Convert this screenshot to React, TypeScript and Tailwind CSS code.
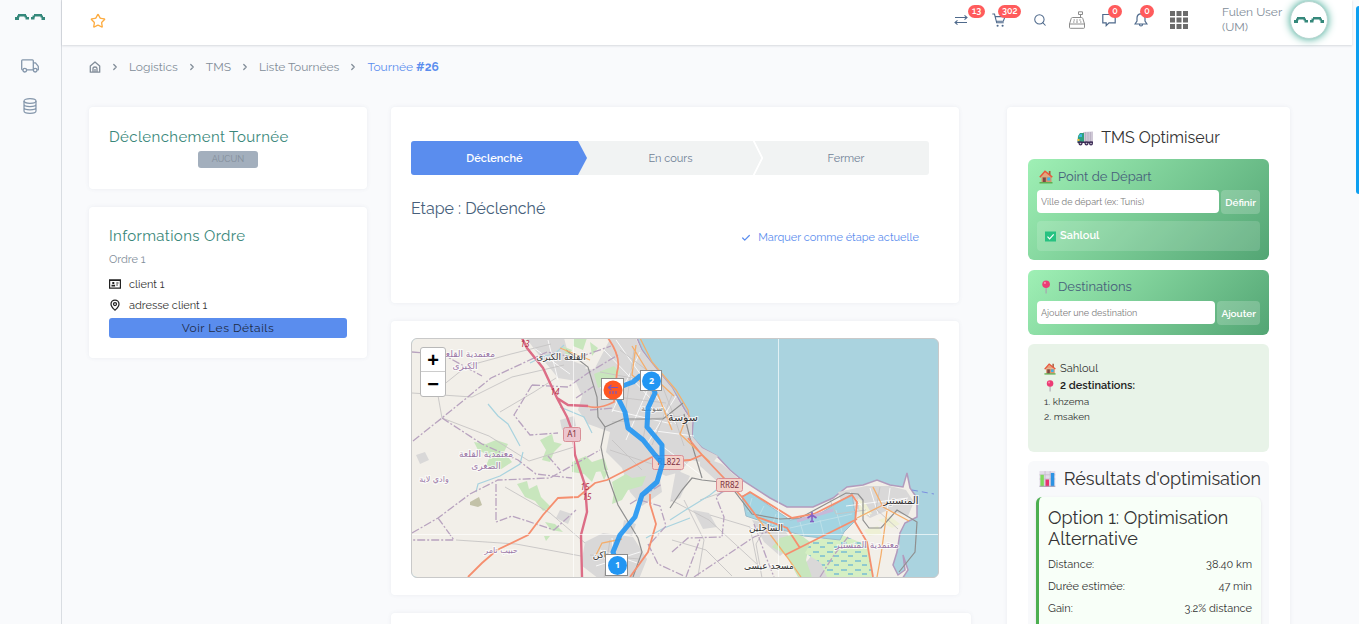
import React from 'react';
import { Check, ChevronRight, MapPin, Search, Star } from 'lucide-react';

const BREADCRUMBS = ['Logistics', 'TMS', 'Liste Tournées'];

const RESULTS = [
  { label: 'Distance:', value: '38.40 km' },
  { label: 'Durée estimée:', value: '47 min' },
  { label: 'Gain:', value: '3.2% distance' },
];

const CARD = 'rounded bg-white shadow-[0_0_4px_rgba(60,80,110,0.08)]';

function Logo({ className }: { className: string }) {
  return (
    <svg viewBox="0 0 30 6" className={className} fill="#35887b" aria-hidden="true">
      <path d="M3 0h8v2.500H3zM0 3h4v3H0zM2 1.500h2.500v2H2zM9.500 1.500h2.500v2h-2.500zM10.500 3h3.500v2.500h-3.500zM19 0h8v2.500h-8zM16 3h3.500v2.500H16zM17.500 1.500h2.500v2h-2.500zM25.500 1.500h2.500v2h-2.500zM26.500 3H30v3h-3.500z" />
    </svg>
  );
}

function TruckIcon() {
  return (
    <svg viewBox="0 0 18 14" className="h-[14px] w-[18px]" fill="none" stroke="#8496ab" strokeWidth="1.3" strokeLinejoin="round">
      <path d="M2 10.8H1.4Q.7 10.8.7 10V1.7Q.7.8 1.6.8h9.8q.9 0 .9.9v9.1H5.6M12.3 3.9h2.2l2.8 3.5v3.4h-1.2" />
      <circle cx="3.8" cy="11.2" r="1.8" />
      <circle cx="14.2" cy="11.2" r="1.8" />
    </svg>
  );
}

function DatabaseIcon() {
  return (
    <svg viewBox="0 0 14 16" className="h-4 w-[14px]" fill="none" stroke="#8496ab" strokeWidth="1.2">
      <ellipse cx="7" cy="3" rx="6" ry="2.3" />
      <path d="M1 3v10c0 1.3 2.7 2.3 6 2.3s6-1 6-2.3V3M1 6.3c0 1.3 2.7 2.3 6 2.3s6-1 6-2.3M1 9.6c0 1.3 2.7 2.3 6 2.3s6-1 6-2.3" />
    </svg>
  );
}

function HouseIcon() {
  return (
    <svg viewBox="0 0 12 12" className="h-3 w-3" fill="none" stroke="#828d99" strokeWidth="1.300" strokeLinejoin="round">
      <path d="M1.300 5 6 1l4.700 4v6.200H1.300zM4 11V7.500q0-1.500 2-1.500t2 1.500V11M6 8v3" />
    </svg>
  );
}

function ExchangeIcon() {
  return (
    <svg viewBox="0 0 14 12" className="h-3 w-[14px]" fill="none" stroke="#4f6a8c" strokeWidth="1.100">
      <path d="M1 3.500h12M10.500 1.300 13 3.500l-2.500 2.200M13 8.500H1M3.500 6.300 1 8.500l2.500 2.200" />
    </svg>
  );
}

function CartIcon() {
  return (
    <svg viewBox="0 0 14 14" className="h-[14px] w-[14px]" fill="none" stroke="#4f6a8c" strokeWidth="1.1">
      <path d="M.3 1h2.200l2.200 8.800h7M3.200 3.600h9.800l-1.700 4.600H4.300" />
      <circle cx="5.600" cy="12.700" r=".5" />
      <circle cx="10.600" cy="12.700" r=".5" />
    </svg>
  );
}

function RegisterIcon() {
  return (
    <svg viewBox="0 0 18 18" className="h-[18px] w-[18px]" fill="none" stroke="#8b8b8b" strokeWidth="1">
      <path d="M10.500.8h4v2.700h-4zM12.500 3.500v3M4.500 6.500h9q1 0 1.300 1L16.500 13h-15L3.200 7.500q.3-1 1.300-1zM1.500 13v3.500q0 .8.800.8h13.400q.8 0 .8-.8V13M5.500 9H7M8.300 9h1.500M11.200 9h1.500M5 11h1.500M8 11h2M12 11h1.500" />
    </svg>
  );
}

function ChatIcon() {
  return (
    <svg viewBox="0 0 14 14" className="h-[14px] w-[14px]" fill="none" stroke="#4f6a8c" strokeWidth="1.200">
      <path d="M.8 1.500h12.400v8.300H7L4.200 12.600V9.800H.8z" />
    </svg>
  );
}

function BellIcon() {
  return (
    <svg viewBox="0 0 14 14" className="h-[14px] w-[14px]" fill="none" stroke="#4f6a8c" strokeWidth="1.200">
      <path d="M7 .8c-2.600 0-4 1.900-4 4.200V8L1 11h12l-2-3V5c0-2.300-1.400-4.200-4-4.200zM5.500 11.500c0 2 3 2 3 0" />
    </svg>
  );
}

function ClientIcon() {
  return (
    <svg viewBox="0 0 12 10" className="mt-[-2px] h-[10px] w-3" fill="none" stroke="#222">
      <path d="M.6.900h10.800v8.300H.6zM.5 1.500h11" strokeWidth="1.200" />
      <path d="M3.300 3h2v2h-2zM2.500 5.700h3.600V7.500H2.500zM7.300 3.500h2.200v1H7.300zM7.300 5.500h1.500v1H7.300z" fill="#222" stroke="none" />
    </svg>
  );
}

function LorryIcon() {
  return (
    <svg viewBox="0 0 17 15" className="h-[15px] w-[17px]">
      <path d="M6 1l10-.500v10.500H6z" fill="#cfc8d6" />
      <path d="M8.500 1v10M11 1v10M13.500 1v10" stroke="#b3aabd" strokeWidth=".7" />
      <path d="M1 5l2-3h4v9H.500z" fill="#2fa07d" />
      <path d="M1.400 6l1.500-2.700H5V6z" fill="#3cb8e8" />
      <path d="M.5 8h2v2h-2z" fill="#f6b93b" />
      <path d="M.500 10.500h15.500v1.500H.500z" fill="#3b2b55" />
      <g fill="#3b2b55">
        <circle cx="3.500" cy="12.500" r="2" />
        <circle cx="9.500" cy="12.500" r="2" />
        <circle cx="14" cy="12.500" r="2" />
      </g>
      <g fill="#cfc8d6">
        <circle cx="3.500" cy="12.500" r=".8" />
        <circle cx="9.500" cy="12.500" r=".8" />
        <circle cx="14" cy="12.500" r=".8" />
      </g>
    </svg>
  );
}

function HomeEmoji({ className }: { className: string }) {
  return (
    <svg viewBox="0 0 14 14" className={className}>
      <path d="M2.500 6.500h10v6h-10z" fill="#d9936c" />
      <path d="M7 1.500 12 6.500H2z" fill="#e8a27c" />
      <path d="M9.800 1h1.700v4H9.800z" fill="#a5583c" />
      <path d="M.8 7.300 6 1.200l7.300 5.900" fill="none" stroke="#e8563c" strokeWidth="1.500" />
      <path d="M3.800 7.500h3v5h-3z" fill="#7a4a45" />
      <path d="M8.300 7.500h2.900v3H8.300z" fill="#35b5f0" />
      <path d="M.5 12h13v1.500H.5z" fill="#5fae50" />
    </svg>
  );
}

function PinEmoji({ className }: { className: string }) {
  return (
    <svg viewBox="0 0 14 14" className={className}>
      <path d="M6.500 7h1.200v6.500H6.500z" fill="#a8a3b0" />
      <circle cx="7.100" cy="4.200" r="3.800" fill="#ec3c75" />
      <circle cx="5.900" cy="2.900" r="1.100" fill="#ff86ab" />
    </svg>
  );
}

function CheckEmoji() {
  return (
    <svg viewBox="0 0 11 11" className="h-[11px] w-[11px]">
      <path d="M0 .5h11v10H0z" fill="#27c281" />
      <path d="M2.500 5.700 4.600 7.800 8.700 3.300" fill="none" stroke="#fff" strokeWidth="1.200" />
    </svg>
  );
}

function ChartEmoji() {
  return (
    <svg viewBox="0 0 18 18" className="h-[18px] w-[18px]">
      <path d="M.5.500h17v17H.5z" fill="#e3dce9" />
      <path d="M.5 4.500h17M.5 9h17M6.500.500v17M12 .500v17" stroke="#c3b9cc" strokeWidth=".8" />
      <path d="M1.500 4.500h3.700v12.500H1.500z" fill="#7fd95c" />
      <path d="M7 9.500h3.700v7.500H7z" fill="#e8336f" />
      <path d="M12.700 2.500h3.700v14.500h-3.700z" fill="#2c93e3" />
      <path d="M.5 16.800h17" stroke="#a79db3" />
    </svg>
  );
}

function Badge({ near, children }: { near?: boolean; children: React.ReactNode }) {
  return (
    <span
      className={`absolute flex h-[13px] min-w-[14px] items-center justify-center rounded-full bg-[#ff5b5c] px-1 text-[9px] leading-none font-semibold text-white ${
        near ? '-top-[8px] left-[6px]' : '-top-[9px] left-[14px]'
      }`}
    >
      {children}
    </span>
  );
}

function Sidebar() {
  return (
    <aside className="flex w-[62px] shrink-0 flex-col items-center border-r border-[#d9dde2] bg-[#f9fafc] pt-[14px] pr-px">
      <Logo className="h-[6px] w-[30px]" />
      <nav className="mt-[39px] flex flex-col items-center gap-[25px]" aria-label="Modules">
        <a href="#tms" aria-label="TMS"><TruckIcon /></a>
        <a href="#stock" aria-label="Stock"><DatabaseIcon /></a>
      </nav>
    </aside>
  );
}

function Header() {
  return (
    <header className="mr-[7px] flex h-[45px] shrink-0 items-center bg-white pr-6 pb-[5px] pl-[28px] shadow-[0_1px_2px_rgba(60,70,90,0.18)]">
      <button type="button" aria-label="Favori" className="pt-[2px]">
        <Star className="h-4 w-4 text-[#fdac41]" strokeWidth={2} />
      </button>
      <div className="ml-auto flex items-center">
        <div className="mr-[34px] flex items-center text-[#4f6a8c]">
          <button type="button" aria-label="Transferts" className="relative mr-6"><ExchangeIcon /><Badge>13</Badge></button>
          <button type="button" aria-label="Panier" className="relative mr-[27px]"><CartIcon /><Badge near>302</Badge></button>
          <button type="button" aria-label="Rechercher" className="mr-[21px]"><Search className="h-[14px] w-[14px]" strokeWidth={1.800} /></button>
          <button type="button" aria-label="Caisse" className="mr-4"><RegisterIcon /></button>
          <button type="button" aria-label="Messages" className="relative mr-[18px]"><ChatIcon /><Badge near>0</Badge></button>
          <button type="button" aria-label="Notifications" className="relative mr-[22px]"><BellIcon /><Badge near>0</Badge></button>
          <button type="button" aria-label="Applications">
            <svg viewBox="0 0 18 18" className="h-[18px] w-[18px]" fill="#6b6b6b">
              <path d="M0 0h5v5H0zM6.500 0h5v5h-5zM13 0h5v5h-5zM0 6.500h5v5H0zM6.500 6.500h5v5h-5zM13 6.500h5v5h-5zM0 13h5v5H0zM6.500 13h5v5h-5zM13 13h5v5h-5z" />
            </svg>
          </button>
        </div>
        <p className="w-[68px] text-xs leading-[15px] text-[#828d99]">Fulen User (UM)</p>
        <span className="flex h-[38px] w-[38px] items-center justify-center rounded-full border border-[#b9d6d1] bg-white shadow-[0_0_8px_#35a58f]">
          <Logo className="h-[6px] w-[30px]" />
        </span>
      </div>
    </header>
  );
}

function Breadcrumbs() {
  return (
    <nav aria-label="Fil d'Ariane" className="flex items-center gap-[9px] text-xs leading-5 text-[#828d99]">
      <a href="#home" aria-label="Accueil"><HouseIcon /></a>
      {BREADCRUMBS.map((item) => (
        <React.Fragment key={item}>
          <ChevronRight className="h-[10px] w-[10px]" strokeWidth={3} />
          <a href="#crumb">{item}</a>
        </React.Fragment>
      ))}
      <ChevronRight className="h-[10px] w-[10px]" strokeWidth={3} />
      <span className="text-[#5a8dee]">Tournée <b className="font-bold">#26</b></span>
    </nav>
  );
}

function OrderColumn() {
  return (
    <div className="flex flex-col gap-[18px]">
      <section className={`${CARD} h-[82px] px-5 pt-[19px]`}>
        <h2 className="text-[15px] leading-[22px] tracking-wide text-[#39877a]">Déclenchement Tournée</h2>
        <div className="mt-[3px] flex justify-center">
          <button type="button" disabled className="h-[17px] w-[60px] rounded-[3px] bg-[#a3afbd] text-[9px] leading-none text-[#828d99]">AUCUN</button>
        </div>
      </section>
      <section className={`${CARD} px-5 pt-[18px] pb-5`}>
        <h2 className="text-[15px] leading-[22px] tracking-wide text-[#39877a]">Informations Ordre</h2>
        <p className="mt-[5px] text-[11px] leading-4 text-[#828d99]">Ordre 1</p>
        <p className="mt-[9px] flex items-center gap-2 text-[11px] leading-4 text-[#333]"><ClientIcon />client 1</p>
        <p className="mt-[5px] flex items-center gap-2 text-[11px] leading-4 text-[#333]"><MapPin className="mt-[-2px] h-3 w-3 text-[#222]" strokeWidth={2.500} />adresse client 1</p>
        <button type="button" className="mt-1 block h-5 w-full rounded-[3px] bg-[#5a8dee] text-xs leading-5 tracking-[0.5px] text-[#1d2b45]">Voir Les Détails</button>
      </section>
    </div>
  );
}

function Stepper() {
  return (
    <ol className="grid h-[34px] grid-cols-[176fr_176fr_166fr] overflow-hidden rounded-[3px] bg-[#f1f3f3] text-[11px] text-[#6f7f95]">
      <li className="relative">
        <svg viewBox="0 0 176 34" preserveAspectRatio="none" className="absolute inset-0 h-full w-full">
          <path d="M0 0h167l9 17-9 17H0z" fill="#5a8dee" />
        </svg>
        <button type="button" className="relative h-full w-full pt-[2px] pr-[9px] font-semibold text-white">Déclenché</button>
      </li>
      <li className="relative">
        <button type="button" className="h-full w-full pt-[2px] pr-[9px]">En cours</button>
        <svg viewBox="0 0 10 34" className="absolute top-0 right-0 h-[34px] w-[10px]" fill="none" stroke="#fff" strokeWidth="1.800">
          <path d="M.5-.500 9.300 17 .5 34.500" />
        </svg>
      </li>
      <li><button type="button" className="h-full w-full pt-[2px]">Fermer</button></li>
    </ol>
  );
}

function MapView() {
  return (
    <div className="relative h-[240px] overflow-hidden rounded-md border border-[#c9c9c9] bg-[#aad3df] normal-nums">
      <svg viewBox="412 339 526 238" preserveAspectRatio="xMidYMid slice" className="h-full w-full" role="img" aria-label="Carte de la tournée">
        <defs>
          <pattern id="marsh" width="14" height="9" patternUnits="userSpaceOnUse">
            <path d="M1 3h6M8 7h5" stroke="#4aa3dc" strokeWidth="1.100" />
          </pattern>
        </defs>
        <path
          d="M405 330H634L637 338 642 350 653 365 672 388 685 410 693 422 692 437 702 448 717 456 730 470 742 480 770 498 787 507H813L833 498 847 487 863 485 877 480 890 485 903 487 907 473 910 488 917 498V517L905 523 900 533 897 552 893 565 898 575 905 570 903 555 908 570 900 582H405z"
          fill="#f2efe9"
          stroke="#b29bbd"
          strokeWidth="1.500"
        />
        {/* built-up areas */}
        <g fill="#d9d8d8">
          <path d="M526 338h38l6 22 16 6-4 16-24-4-8-10-12-14zM610 339h26l6 12 11 14 19 23 12 22 8 12v14l10 12 16 8-6 8-22-4-10 12-14 4-22-10-20 4-18-18 4-20-22-8-10-14 4-14-8-18 8-10 12 2zM585 542l18-9 30 4 14 22-8 20h-40l-18-14zM622 468l18-12 18 10 4 26-20 14-12-14zM752 520l30 6 12 18-14 12-16-14zM838 492l28-6 24 0 16 4 8 12-6 14-20-6-18 8-14-10-14-4zM416 455l9-3 4 8-9 4zM700 456l22 8 20 18-6 8-18-8-18-16zM560 510l12 4-4 10-12-6zM812 555l20 8 6 14h-26l-8-12zM693 510l16 3 8 14-14 2zM560 420l14-4 2 10-14 4zM624 520l12 4-4 12-10-4zM676 470l14 6-10 22-10 4z" />
        </g>
        {/* parks and orchards */}
        <g fill="#c8e6bd">
          <path d="M474 442l12 2 10-4 12 4-4 8 8 10-12 8-14-4 4-10-12-6zM517 484l10-3 2 8 8-4 4 12 10 10-8 4-8-10-10-4zM594 374l20-8 6 6-12 12-10 4zM612 482l14-8 6 4 14-2-4 10-14 4-6 10-10 4 2-12zM540 440l12-6 2 8 8 2-8 8-4 10-8-2 4-10zM572 462l14-6 6 6 12-4 4 12-12 2-4 10-8-8-12-2zM780 538l18-5 12 9-4 18 6 17h-14l-12-22-14-8zM545 522l10 2 8 8-12-2zM573 338h14l-4 12-10-4zM562 346l10 4-4 8zM590 342l8 6-6 8zM544 536l6 0-4 5zM600 470l8 2-4 8z" />
        </g>
        <path d="M812 541l30-6 25 10 6 32h-46l-6-14-16-10z" fill="#d5efc3" />
        <path d="M812 541l30-6 25 10 6 32h-46l-6-14-16-10z" fill="url(#marsh)" />
        <path d="M742 496l9-3 39 27 26-4 36-22 4 26-12 12-4 8-36-4-28-8-18-8-12-4z" fill="#a3d4e2" stroke="#9bbccb" />
        <path d="M752 498l-4 14M764 506l-6 12M776 514l-4 12M800 522l4 14M820 520l4 16M836 510l6 22M790 528l62-14" stroke="#c3e2ea" strokeWidth=".8" fill="none" />
        <path d="M858 498l8 6 6 10-12 2zM878 520l12-4 10 8-8 4zM864 530l14-4 4 8-14 2z" fill="#eef0d5" />
        <path d="M470 502l9-5 3 8-4 2-8-2z" fill="#c3c2a8" />
        {/* local streets */}
        <g fill="none" stroke="#fff" strokeWidth=".8">
          <path d="M604 350l50 52M616 340l60 84M600 388l44-10M612 410l60 14M640 352l-28 60M656 370l-30 70M676 396l-30 50M648 430l46 6M662 446l40 30M600 550l40 14M612 538l4 36M596 566l44-14M534 348l36 26M548 340l10 40M850 492l20 24M870 488l8 26M846 506l62-8M890 488l-4 30" />
        </g>
        <g fill="none" stroke="#c6c4c4" strokeWidth=".9">
          <path d="M412 393l60 4 40-20 52-12M442 418l-5-28 30-24 44-12 40-10M442 418l47 18 40 25 45-14M500 412l34-20 22-14M456 540l60 4 65 12M505 487l45 26 35 30M700 500l35-12 4-6M671 500l38 20 50 46M710 515l40 12 8 40M880 487l-4 22 22 20M620 350l40 30 14 36 10 30M600 372l54 10M600 395l66 8M612 422l72-6M634 350l-10 72M655 370l-12 70M672 395l-20 50M612 440l30 30M770 520l-14 24 6 34M610 450l60 20M590 555l50 4M610 540l-6 38M830 500l6 14 30-4M672 540l34 10 26 26M684 500l20 40-6 36" />
        </g>
        <g fill="none" stroke="#a9d3df" strokeWidth="1.200">
          <path d="M488 404l10 12 10 8 12 22M523 452l-3 12-20 12-22 8-2 8M530 363l12-6 14-4 8-8M560 407l24 10 8 16M670 520l14-9 26-16 20-16M646 538l18-10 26-10" />
        </g>
        {/* administrative limits */}
        <g fill="none" stroke="#b8a3bf" strokeWidth="1.300" strokeDasharray="8 2 2 2">
          <path d="M413 441l29-23 49-40 56-26 30 6 34-12M442 418l40 26 36 16 18 14 36 4M412 352l30 2 40 22M532 385l36 2 20-14 30-18M532 385l-18 30 16 20 28-2M412 533l26-15 32-24 28-14 52-2 50-28M438 518l16 22h-42M496 484v38l16-6 42 14 22-20M548 456l12 14M672 552l16-14 34-1 2-20-8-20 22-18M576 398l18-12M590 410l24-2M648 544l10 20 26 12M686 577l14-38M640 500l20 6 6 20-18 20M820 577l14-22 14-18M754 524l14 38 6 15M630 504l32-20M694 577l60-40 30-12" />
        </g>
        {/* railway */}
        <g fill="none" stroke="#8f8f8f" strokeWidth="1.200">
          <path d="M566 350l22 17 9 30 1 20 7 10-4 20 4 21 13 37 20 33 4 14-9 25M605 427l18-8h40l20-16M670 508l12-18 10-12 10 2 18 2 12 6 20 26 28 5 20-1 46-25 12 1 5 6v20l6 8h12l16-18 20 12-2 30-16 20M702 478l-12-40-6-24" />
        </g>
        {/* trunk roads */}
        <g fill="none" stroke="#f4ae6c" strokeWidth="1.300">
          <path d="M640 338l12 24 24 28 12 20 2 12M632 346l16 26 26 24M636 345l-4 30 26 20 14 35M757 517l30 40 14 20M883 507l-10-20M883 507l26 14M887 511l-6 44-4 22M596 555l6-12 20-4M857 518l30-15M686 418l-6 16 30 28M590 360l-30-12" />
        </g>
        <g fill="none" stroke="#f58f6f" strokeWidth="1.800">
          <path d="M468 577l14-14 15-13 31-15 15-20 15-17 20-1 17-14 12-3 45-23M608 338q14 20 9 34l-3 30q-16 8-27 4M688 438l14 17 40 42 15 20 30 11 13 20M785 555l72-36M742 497l8-5 42 26 22-4 38-19 5 7-2 20 12 20 6 35M660 462l30-2 12-5M650 494l0 10 6 20-8 28-18 25" />
        </g>
        <g fill="none" stroke="#dc6d86" strokeWidth="2.400">
          <path d="M522 338l5 10 16 20 14 30 10 19 6 16 2 22 10 30 2 27-6 23 1 42M557 398l11 7 20 1" />
        </g>
        <path d="M797 521l36-11" stroke="#c8b8d8" strokeWidth="3" />
        <path d="M812 512v9M807.500 518l4.500-3 4.500 3M810 521.500h4" stroke="#8461c4" strokeWidth="1.600" fill="none" />
        <path d="M912 490l22 4" stroke="#7b8fe0" strokeDasharray="6 4" />
        <path d="M573.500 338v240M778.500 338v240M411 534.500h528" stroke="#fff" strokeOpacity=".65" strokeWidth="1" />
        {/* road shields */}
        <g stroke="#d98f96">
          <rect x="563.500" y="427.500" width="17" height="14" rx="2" fill="#edc6cf" />
          <rect x="652.500" y="455.500" width="31" height="14" rx="2" fill="#f4d3ca" />
          <rect x="716.500" y="478.500" width="26" height="13" rx="2" fill="#f4d3ca" />
        </g>
        <g fontFamily="Noto Sans, sans-serif" fontSize="8" textAnchor="middle" fill="#7d3140">
          <text x="572" y="437">A1</text>
          <text x="669" y="465">RL822</text>
          <text x="729.500" y="488">RR82</text>
        </g>
        <g fontFamily="Noto Sans, sans-serif" fontSize="8" fontStyle="italic" textAnchor="middle" fill="#b02a48">
          <text x="525" y="347">13</text>
          <text x="555" y="395">14</text>
          <text x="585" y="490">15</text>
          <text x="587" y="500">15</text>
        </g>
        <g fontFamily="DejaVu Sans, sans-serif" fontSize="9" textAnchor="middle" stroke="#fff" strokeWidth="2" strokeOpacity=".7" paintOrder="stroke">
          <g fill="#9a77a6">
            <text x="468" y="357">معتمدية القلعة</text>
            <text x="465" y="369">الكبرى</text>
            <text x="486" y="457">معتمدية القلعة</text>
            <text x="486" y="469">الصغرى</text>
            <text x="434" y="482" fontSize="8">وادي لاية</text>
            <text x="501" y="553" fontSize="8">حبيب تامر</text>
            <text x="867" y="548">معتمدية المنستير</text>
          </g>
          <g fill="#333">
            <text x="561" y="360">القلعة الكبرى</text>
            <text x="683" y="421" fontSize="11">سوسة</text>
            <text x="652" y="411" fontSize="8" fill="#777">سوسة</text>
            <text x="901" y="504" fontSize="10">المنستير</text>
            <text x="766" y="531">الساحلين</text>
            <text x="769" y="569">مسجد عيسى</text>
            <text x="606" y="558">مساكن</text>
          </g>
        </g>
        {/* route */}
        <path
          d="M613 390l12-5 8-3 7-6 11 5 4 12-7 15-1 19 15 18v20l-5 17-15 13-7 22-15 18-7 17 4 13M613 390l5 8 7 14 3 16 15 12 12 15 7 8"
          fill="none"
          stroke="#2196f3"
          strokeOpacity=".9"
          strokeWidth="5"
          strokeLinejoin="round"
        />
        <g fill="#fff" stroke="#8b8b8b">
          <rect x="601.500" y="378.500" width="22" height="21" />
          <rect x="640.500" y="370.500" width="21" height="20" />
          <rect x="605.500" y="554.500" width="22" height="21" />
        </g>
        <circle cx="613" cy="390" r="9.500" fill="#ff5722" />
        <circle cx="651.500" cy="381" r="9.500" fill="#2196f3" />
        <circle cx="617.500" cy="565.500" r="9.500" fill="#2196f3" />
        <path d="M609 387.500h9M611.500 385l-3 2.500 3 2.500M610 391v3M613 391v3M616 391v3" stroke="#7a55c0" strokeWidth="1.200" fill="none" />
        <g fontFamily="Open Sans, sans-serif" fontSize="9" fontWeight="700" textAnchor="middle" fill="#fff">
          <text x="651.500" y="384">2</text>
          <text x="617.500" y="568">1</text>
        </g>
      </svg>
      <div className="absolute top-2 left-2 flex w-[26px] flex-col overflow-hidden rounded-[3px] border border-[#b8b8b8] bg-white font-['Liberation_Sans',sans-serif] text-xl leading-none font-bold text-black">
        <button type="button" aria-label="Zoom avant" className="h-6 border-b border-[#ccc]">+</button>
        <button type="button" aria-label="Zoom arrière" className="h-6">−</button>
      </div>
    </div>
  );
}

function RouteColumn() {
  return (
    <div className="flex flex-col gap-[18px]">
      <section className={`${CARD} mr-3 h-[196px] pt-[34px] pr-[30px] pl-5`}>
        <Stepper />
        <h3 className="mt-[22px] text-base leading-6 text-[#475f7b]">Etape : Déclenché</h3>
        <div className="mt-[9px] flex justify-end pr-[10px]">
          <button type="button" className="flex items-center gap-[7px] text-[11px] leading-4 text-[#5a8dee]">
            <Check className="h-[10px] w-[10px]" strokeWidth={3} />
            Marquer comme étape actuelle
          </button>
        </div>
      </section>
      <section className={`${CARD} mr-3 px-5 py-[17px]`}>
        <MapView />
      </section>
      <section className={`${CARD} h-20`} />
    </div>
  );
}

function PlaceForm({ id, label, placeholder, action }: { id: string; label: string; placeholder: string; action: string }) {
  return (
    <form className="flex gap-[2px]" onSubmit={(e) => e.preventDefault()}>
      <input
        id={id}
        aria-label={label}
        placeholder={placeholder}
        className="h-[23px] min-w-0 flex-1 rounded bg-white px-1 text-[9px] text-[#475f7b] placeholder:text-[#7d7d7d]"
      />
      <button type="submit" className="h-6 shrink-0 rounded bg-white/20 px-1 text-[10px] font-semibold text-white">{action}</button>
    </form>
  );
}

function Optimizer() {
  return (
    <div className="min-w-0 pl-3">
      <section className={`${CARD} px-[21px] pt-[19px] pb-6`}>
        <h2 className="flex items-center justify-center gap-[7px] text-base leading-6 text-[#333]"><LorryIcon />TMS Optimiseur</h2>

        <div className="mt-[9px] rounded-md bg-linear-[135deg,#9ff0b5,#53a574] p-[9px]">
          <h3 className="mb-1 flex items-center gap-[5px] pl-[2px] text-[13px] leading-[18px] text-[#475f7b]"><HomeEmoji className="h-[14px] w-[14px]" />Point de Départ</h3>
          <PlaceForm id="start" label="Point de départ" placeholder="Ville de départ (ex: Tunis)" action="Définir" />
          <p className="mt-[7px] flex h-[30px] items-center gap-1 rounded bg-white/15 px-2 text-[11px] font-semibold text-white"><CheckEmoji />Sahloul</p>
        </div>

        <div className="mt-[10px] rounded-md bg-linear-[135deg,#9ff0b5,#53a574] px-[9px] pt-2 pb-[10px]">
          <h3 className="mb-[5px] flex items-center gap-[5px] pl-[2px] text-[13px] leading-[18px] text-[#475f7b]"><PinEmoji className="h-[14px] w-[14px]" />Destinations</h3>
          <PlaceForm id="destination" label="Destination" placeholder="Ajouter une destination" action="Ajouter" />
        </div>

        <div className="mt-[9px] h-[108px] rounded-md bg-[#e8f3e8] px-4 pt-4 text-[10px] text-[#333]">
          <p className="flex items-center gap-1 text-[11px] leading-[17px]"><HomeEmoji className="h-3 w-3" />Sahloul</p>
          <p className="flex items-center gap-1 text-[11px] leading-[17px] font-semibold text-[#222]"><PinEmoji className="h-3 w-3" />2 destinations:</p>
          <p className="leading-[15px]">1. khzema</p>
          <p className="leading-[15px]">2. msaken</p>
        </div>

        <div className="mt-[9px] rounded-md bg-[#f8f9fb] px-2 pt-[6px] pb-2">
          <h2 className="flex items-center gap-2 pl-[3px] text-lg leading-6 whitespace-nowrap text-[#333]"><ChartEmoji />Résultats d'optimisation</h2>
          <div className="mt-[6px] rounded-md border-l-[3px] border-[#4caf50] bg-[#f8fff8] px-[9px] pt-[10px] pb-3 shadow-[0_1px_3px_rgba(0,0,0,0.1)]">
            <h3 className="mb-[5px] text-lg leading-[21px] text-[#333]">Option 1: Optimisation Alternative</h3>
            <dl className="text-[11px] leading-[22px] text-[#333]">
              {RESULTS.map((row) => (
                <div key={row.label} className="flex justify-between">
                  <dt>{row.label}</dt>
                  <dd>{row.value}</dd>
                </div>
              ))}
            </dl>
          </div>
        </div>
      </section>
    </div>
  );
}

export default function App() {
  return (
    <div className="relative flex h-screen overflow-hidden bg-[#f9fafc] font-['Raleway','Open_Sans',sans-serif] oldstyle-nums">
      <Sidebar />
      <div className="flex min-w-0 flex-1 flex-col">
        <Header />
        <main className="min-h-0 flex-1 overflow-y-auto pt-3 pr-[69px] pl-[27px] [scrollbar-width:none]">
          <Breadcrumbs />
          <div className="mt-[30px] grid grid-cols-[278fr_580fr_295fr] gap-6">
            <OrderColumn />
            <RouteColumn />
            <Optimizer />
          </div>
        </main>
      </div>
      <div className="absolute top-[6px] right-0 h-[188px] w-[3px] rounded-l bg-[#0d9ff0]" />
    </div>
  );
}
